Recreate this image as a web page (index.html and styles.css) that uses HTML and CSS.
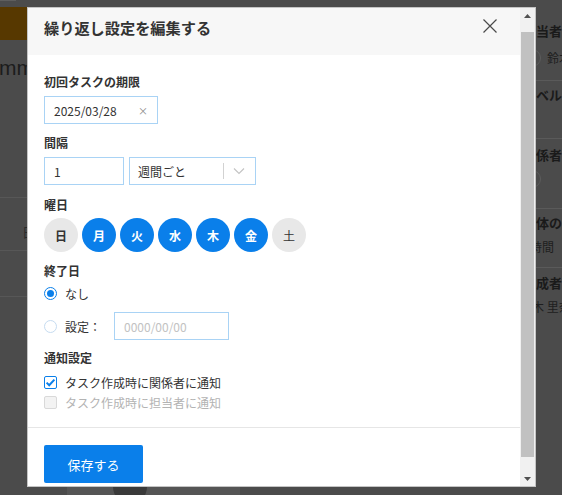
FILE: index.html
```html
<!DOCTYPE html>
<html lang="ja">
<head>
<meta charset="utf-8">
<title>繰り返し設定を編集する</title>
<link rel="stylesheet" href="styles.css">
</head>
<body>
<div class="page">
  <div class="main">
    <div class="topbar"><span class="topline"></span></div>
    <div class="banner"></div>
    <div class="heading">mmmm</div>
    <div class="rows">
      <div class="row r1"><span class="cell">日付</span></div>
      <div class="row r2"></div>
      <div class="row r3"></div>
    </div>
    <div class="card"><span class="card-avatar"></span></div>
  </div>
  <aside class="side">
    <section class="sec s1">
      <div class="side-label">担当者</div>
      <div class="side-value"><span class="mini-avatar"></span>鈴木 里奈</div>
    </section>
    <section class="sec s2">
      <div class="side-label">レベル</div>
    </section>
    <section class="sec s3">
      <div class="side-label">関係者</div>
      <div class="side-value"><span class="mini-avatar"></span></div>
    </section>
    <section class="sec s4">
      <div class="side-label">全体の見積</div>
      <div class="side-value shift">時間</div>
    </section>
    <section class="sec s5">
      <div class="side-label">作成者</div>
      <div class="side-value shift2">鈴木 里奈</div>
    </section>
  </aside>
</div>

<div class="modal" role="dialog" aria-label="繰り返し設定を編集する">
  <div class="modal-main">
    <header class="modal-head">
      <h2 class="modal-title">繰り返し設定を編集する</h2>
      <button class="close" type="button" aria-label="閉じる">
        <svg width="14" height="14" viewBox="0 0 14 14"><path d="M0.5 0.5 L13.5 13.5 M13.5 0.5 L0.5 13.5" stroke="#4a4a4a" stroke-width="1.2" fill="none"/></svg>
      </button>
    </header>
    <div class="modal-body">
      <div class="label">初回タスクの期限</div>
      <div class="field date-input"><span>2025/03/28</span><span class="clear">×</span></div>

      <div class="label l2">間隔</div>
      <div class="interval">
        <div class="field num-input">1</div>
        <div class="field select">
          <span class="sel-text">週間ごと</span>
          <span class="sel-sep"></span>
          <svg class="chev" width="12" height="8" viewBox="0 0 12 8"><path d="M1 1.5 L6 6.5 L11 1.5" stroke="#c4c4c4" stroke-width="1.2" fill="none"/></svg>
        </div>
      </div>

      <div class="label l3">曜日</div>
      <div class="days">
        <span class="day off bold">日</span>
        <span class="day on">月</span>
        <span class="day on">火</span>
        <span class="day on">水</span>
        <span class="day on">木</span>
        <span class="day on">金</span>
        <span class="day off">土</span>
      </div>

      <div class="label l4">終了日</div>
      <div class="radio-row r-first"><span class="radio checked"></span><span>なし</span></div>
      <div class="radio-row r-second"><span class="radio"></span><span class="radio-text">設定：</span><div class="field end-input">0000/00/00</div></div>

      <div class="label l5">通知設定</div>
      <div class="check-row c-first">
        <span class="check checked"><svg width="13" height="13" viewBox="0 0 13 13"><path d="M2.6 6.6 L5.2 9.2 L10.4 3.6" stroke="#0a7fea" stroke-width="2" fill="none"/></svg></span>
        <span>タスク作成時に関係者に通知</span>
      </div>
      <div class="check-row disabled">
        <span class="check"></span>
        <span>タスク作成時に担当者に通知</span>
      </div>
    </div>
    <footer class="modal-foot">
      <button class="save" type="button">保存する</button>
    </footer>
  </div>
  <div class="vscroll" aria-hidden="true">
    <span class="sb-btn"><svg width="7" height="4" viewBox="0 0 7 4"><path d="M0 4 L3.5 0 L7 4 Z" fill="#505050"/></svg></span>
    <span class="sb-track"><span class="sb-thumb"></span></span>
    <span class="sb-btn"><svg width="7" height="4" viewBox="0 0 7 4"><path d="M0 0 L3.5 4 L7 0 Z" fill="#505050"/></svg></span>
  </div>
</div>
</body>
</html>
```

FILE: styles.css
```css
* { box-sizing: border-box; }
html, body { margin: 0; height: 100%; }
body {
  background: #4b4b4b;
  font-family: "Noto Sans CJK JP", "Noto Sans", sans-serif;
  overflow: hidden;
  color: #333;
}

/* dimmed page behind the dialog */
.page { display: flex; height: 495px; }
.main { width: 523px; flex: none; }
.topbar { height: 7px; }
.topline { display: block; width: 16px; height: 1px; background: #5e5e5e; }
.banner { height: 33px; background: #573800; }
.heading {
  font-family: "Liberation Sans", sans-serif;
  font-size: 21px;
  line-height: 24px;
  color: #1c1c1c;
  margin-left: -1px;
  height: 40px;
  padding-top: 16px;
}
.rows { margin-top: 117px; }
.row { border-top: 1px solid #575757; }
.r1 { height: 53px; padding: 20px 0 0 22px; }
.r2 { height: 46px; }
.r3 { height: 1px; }
.cell { font-size: 13px; line-height: 20px; color: #2a2a2a; }
.card {
  margin: 173px 0 0 67px;
  width: 173px;
  height: 40px;
  background: #555;
  border-radius: 6px;
  padding-left: 46px;
}
.card-avatar { display: block; width: 34px; height: 34px; border-radius: 50%; background: #3a3a3a; }

.side { flex: 1; }
.sec { border-bottom: 1px solid #5a5a5a; }
.side-label { font-size: 13px; font-weight: 700; line-height: 20px; color: #1a1a1a; white-space: nowrap; }
.side-value { font-size: 12px; line-height: 20px; color: #1e1e1e; white-space: nowrap; display: flex; align-items: center; gap: 6px; }
.mini-avatar { width: 18px; height: 18px; border-radius: 50%; border: 1px solid #5c5c5c; flex: none; }
.s1 { padding: 21px 0 12px; height: 81px; }
.s1 .side-value { margin-top: 7px; }
.s2 { padding-top: 4px; height: 58px; }
.s3 { padding-top: 6px; height: 70px; }
.s3 .side-value { margin-top: 5px; }
.s4 { padding-top: 4px; height: 59px; }
.s4 .side-value { margin-top: 4px; }
.shift { padding-left: 7px; }
.s5 { padding-top: 5px; border-bottom: 0; }
.s5 .side-value { margin-top: 4px; }
.shift2 { margin-left: -3px; }

/* dialog */
.modal {
  position: fixed;
  top: 7px;
  left: 27px;
  width: 509px;
  height: 480px;
  border: 1px solid #c4c4c4;
  background: #fff;
  display: flex;
}
.modal-main { flex: 1; min-width: 0; overflow: hidden; }
.modal-head {
  height: 47px;
  background: #f7f7f7;
  display: flex;
  align-items: flex-start;
  justify-content: space-between;
  padding: 7px 23px 0 16px;
}
.modal-title {
  margin: 0;
  font-size: 15.2px;
  font-weight: 700;
  line-height: 24px;
  color: #333;
}
.close {
  border: 0;
  background: none;
  padding: 0;
  margin-top: 4px;
  width: 14px;
  height: 14px;
  display: block;
}
.close svg { display: block; }

.modal-body { padding: 17px 16px 15px; }
.label { font-size: 12px; font-weight: 700; line-height: 20px; color: #333; }
.l2 { margin-top: 9px; }
.l3 { margin-top: 10px; }
.l4 { margin-top: 9px; }
.l5 { margin-top: 8px; }

.field {
  height: 28px;
  border: 1px solid #a9d3f5;
  background: #fff;
  font-size: 12px;
  color: #333;
  display: flex;
  align-items: center;
}
.date-input {
  width: 114px;
  margin-top: 4px;
  padding: 0 9px 0 9px;
  justify-content: space-between;
}
.clear { color: #8a8a8a; font-size: 10px; }
.interval { display: flex; gap: 5px; margin-top: 4px; }
.num-input { width: 80px; padding-left: 9px; }
.select { width: 127px; padding-left: 8px; }
.sel-text { flex: 1; }
.sel-sep { width: 1px; height: 16px; background: #d2d2d2; margin-right: 9px; }
.chev { margin-right: 10px; display: block; }

.days { display: flex; gap: 4px; margin-top: 3px; }
.day {
  width: 34px;
  height: 34px;
  border-radius: 50%;
  display: flex;
  align-items: center;
  justify-content: center;
  font-size: 12px;
}
.day.off { background: #e8e8e8; color: #333; }
.day.bold { font-weight: 700; }
.day.on { background: #0a7fea; color: #fff; font-weight: 700; }

.radio-row { display: flex; align-items: center; font-size: 12px; color: #333; }
.r-first { margin-top: 2px; height: 20px; }
.r-second { margin-top: 9px; }
.radio {
  width: 13px;
  height: 13px;
  border-radius: 50%;
  border: 1px solid #c6dcf1;
  margin-right: 8px;
  flex: none;
  display: flex;
  align-items: center;
  justify-content: center;
}
.radio.checked { border: 1.5px solid #0a7fea; }
.radio.checked::after { content: ""; width: 7px; height: 7px; border-radius: 50%; background: #0a7fea; }
.radio-text { width: 49px; }
.end-input { width: 115px; padding-left: 9px; color: #c2c2c2; }

.check-row { display: flex; align-items: center; height: 20px; font-size: 12px; color: #333; }
.c-first { margin-top: 4px; }
.check {
  width: 13px;
  height: 13px;
  border: 1px solid #0a7fea;
  border-radius: 2px;
  margin-right: 8px;
  flex: none;
  background: #fff;
}
.check svg { display: block; margin: -1px; }
.check-row.disabled { color: #b3b3b3; }
.check-row.disabled .check { border-color: #d9d9d9; background: #f3f3f3; }

.modal-foot { border-top: 1px solid #e6e6e6; padding: 17px 16px 21px; }
.save {
  width: 99px;
  height: 38px;
  border: 0;
  border-radius: 2px;
  background: #0a7fea;
  color: #fff;
  font-family: inherit;
  font-size: 13px;
  display: block;
}

/* drawn vertical scrollbar of the dialog */
.vscroll {
  width: 15px;
  flex: none;
  background: #f1f1f1;
  display: flex;
  flex-direction: column;
}
.sb-btn { height: 15px; display: flex; align-items: center; justify-content: center; flex: none; }
.sb-btn svg { display: block; }
.sb-track { flex: 1; display: flex; flex-direction: column; padding: 9px 1px 14px; }
.sb-thumb { flex: 1; background: #c1c1c1; }
```
